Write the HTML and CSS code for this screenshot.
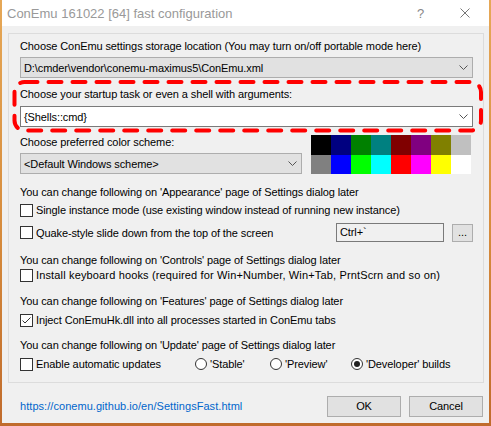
FILE: index.html
```html
<!DOCTYPE html>
<html>
<head>
<meta charset="utf-8">
<link rel="stylesheet" href="styles.css">
</head>
<body>
<div class="window">
  <div class="titlebar">
    <span class="title">ConEmu 161022 [64] fast configuration</span>
    <span class="help">?</span>
    <span class="close"><svg width="10" height="10" viewBox="0 0 10 10"><path d="M0.5 0.5 L9.5 9.5 M9.5 0.5 L0.5 9.5" stroke="#777" stroke-width="1" fill="none"/></svg></span>
  </div>
  <div class="group">
    <div class="label">Choose ConEmu settings storage location (You may turn on/off portable mode here)</div>
    <div class="combo disabled mt4"><span class="combo-text">D:\cmder\vendor\conemu-maximus5\ConEmu.xml</span><svg class="chev" width="9" height="5" viewBox="0 0 9 5"><path d="M0.5 0.5 L4.5 4.5 L8.5 0.5" stroke="#555" fill="none"/></svg></div>
    <div class="label mt9">Choose your startup task or even a shell with arguments:</div>
    <div class="combo white mt5"><span class="combo-text">{Shells::cmd}</span><svg class="chev" width="9" height="5" viewBox="0 0 9 5"><path d="M0.5 0.5 L4.5 4.5 L8.5 0.5" stroke="#555" fill="none"/></svg></div>
    <div class="scheme-row mt8">
      <div class="scheme-left">
        <div class="label">Choose preferred color scheme:</div>
        <div class="combo disabled mt4"><span class="combo-text">&lt;Default Windows scheme&gt;</span><svg class="chev" width="9" height="5" viewBox="0 0 9 5"><path d="M0.5 0.5 L4.5 4.5 L8.5 0.5" stroke="#555" fill="none"/></svg></div>
      </div>
      <div class="palette">
        <i class="c0"></i><i class="c1"></i><i class="c2"></i><i class="c3"></i><i class="c4"></i><i class="c5"></i><i class="c6"></i><i class="c7"></i>
        <i class="c8"></i><i class="c9"></i><i class="c10"></i><i class="c11"></i><i class="c12"></i><i class="c13"></i><i class="c14"></i><i class="c15"></i>
      </div>
    </div>
    <div class="label mt11">You can change following on 'Appearance' page of Settings dialog later</div>
    <div class="check mt4"><span class="box"></span><span>Single instance mode (use existing window instead of running new instance)</span></div>
    <div class="quake-row mt6">
      <div class="check grow"><span class="box"></span><span>Quake-style slide down from the top of the screen</span></div>
      <div class="hotkey">Ctrl+`</div>
      <div class="dots">...</div>
    </div>
    <div class="label mt11">You can change following on 'Controls' page of Settings dialog later</div>
    <div class="check mt1"><span class="box"></span><span class="wide">Install keyboard hooks (required for Win+Number, Win+Tab, PrntScrn and so on)</span></div>
    <div class="label mt12">You can change following on 'Features' page of Settings dialog later</div>
    <div class="check mt5"><span class="box checked"><svg width="11" height="11" viewBox="0 0 11 11"><path d="M1.5 5.5 L4 8 L9.5 2.5" stroke="#333" stroke-width="1" fill="none"/></svg></span><span>Inject ConEmuHk.dll into all processes started in ConEmu tabs</span></div>
    <div class="label mt11">You can change following on 'Update' page of Settings dialog later</div>
    <div class="update-row mt5">
      <div class="check"><span class="box"></span><span>Enable automatic updates</span></div>
      <div class="check"><span class="radio"></span><span>'Stable'</span></div>
      <div class="check"><span class="radio"></span><span>'Preview'</span></div>
      <div class="check"><span class="radio on"><span class="dot"></span></span><span>'Developer' builds</span></div>
    </div>
  </div>
  <div class="footer">
    <span class="link">https://conemu.github.io/en/SettingsFast.html</span>
    <div class="buttons">
      <div class="button">OK</div>
      <div class="button">Cancel</div>
    </div>
  </div>
</div>
<svg class="highlight" width="491" height="426" viewBox="0 0 491 426">
  <rect x="14.5" y="82" width="466.5" height="48.5" rx="10" ry="10" fill="none" stroke="#ff0000" stroke-width="4" stroke-dasharray="13 11" stroke-linecap="round"/>
</svg>
</body>
</html>
```
FILE: styles.css
```css
* { box-sizing: border-box; }
html, body { margin: 0; padding: 0; }
body {
  width: 491px;
  height: 426px;
  position: relative;
  overflow: hidden;
  background: linear-gradient(180deg, #e6a857 0%, #d68b3c 55%, #c06b2c 100%);
  font-family: "Liberation Sans", Arial, sans-serif;
  font-size: 11px;
  letter-spacing: -0.1px;
  color: #000;
}
.window {
  margin-left: 2px;
  width: 487px;
  height: 423px;
  background: #f0f0f0;
  display: flex;
  flex-direction: column;
}
.titlebar {
  height: 26px;
  flex-shrink: 0;
  background: #fff;
  display: flex;
  align-items: center;
}
.title {
  flex: 1;
  padding-left: 5px;
  font-size: 13px;
  letter-spacing: 0;
  color: #999;
}
.help {
  width: 45px;
  text-align: center;
  font-size: 13px;
  color: #888;
}
.close {
  width: 44px;
  margin-right: 2px;
  display: flex;
  justify-content: center;
}
.group {
  margin: 7px 5px 0 6px;
  border: 1px solid #dcdcdc;
  padding: 5px 10px 11px 11px;
  display: flex;
  flex-direction: column;
}
.label {
  height: 14px;
  line-height: 14px;
  white-space: nowrap;
}
.mt1 { margin-top: 1px; }
.mt4 { margin-top: 4px; }
.mt5 { margin-top: 5px; }
.mt6 { margin-top: 6px; }
.mt8 { margin-top: 8px; }
.mt9 { margin-top: 9px; }
.mt11 { margin-top: 11px; }
.mt12 { margin-top: 12px; }
.combo {
  height: 21px;
  border: 1px solid #adadad;
  background: #e1e1e1;
  display: flex;
  align-items: center;
  padding: 0 4px 0 3px;
}
.combo.white {
  background: #fff;
  border-color: #7a7a7a;
}
.combo-text { flex: 1; white-space: nowrap; }
.chev { display: block; }
.scheme-row {
  display: flex;
  height: 39px;
}
.scheme-left {
  width: 282px;
  display: flex;
  flex-direction: column;
}
.palette {
  margin-left: 9px;
  width: 160px;
  height: 39px;
  display: grid;
  grid-template-columns: repeat(8, 20px);
  grid-template-rows: 19.5px 19.5px;
}
.palette i { display: block; }
.c0 { background: #000000; }
.c1 { background: #000080; }
.c2 { background: #008000; }
.c3 { background: #008080; }
.c4 { background: #800000; }
.c5 { background: #800080; }
.c6 { background: #808000; }
.c7 { background: #c0c0c0; }
.c8 { background: #808080; }
.c9 { background: #0000ff; }
.c10 { background: #00ff00; }
.c11 { background: #00ffff; }
.c12 { background: #ff0000; }
.c13 { background: #ff00ff; }
.c14 { background: #ffff00; }
.c15 { background: #ffffff; }
.check {
  height: 14px;
  display: flex;
  align-items: center;
  white-space: nowrap;
}
.wide { letter-spacing: 0.15px; }
.box {
  width: 13px;
  height: 13px;
  border: 1px solid #333;
  background: #fff;
  margin-right: 3px;
  flex-shrink: 0;
  display: flex;
  align-items: center;
  justify-content: center;
}
.radio {
  width: 12px;
  height: 12px;
  border: 1px solid #333;
  border-radius: 50%;
  background: #fff;
  margin-right: 3px;
  flex-shrink: 0;
  display: flex;
  align-items: center;
  justify-content: center;
}
.dot {
  width: 6px;
  height: 6px;
  border-radius: 50%;
  background: #222;
}
.quake-row {
  height: 19px;
  display: flex;
  align-items: center;
}
.grow { flex: 1; }
.hotkey {
  width: 108px;
  height: 19px;
  border: 1px solid #7a7a7a;
  background: #f0f0f0;
  padding-left: 3px;
  line-height: 17px;
}
.dots {
  margin-left: 8px;
  width: 21px;
  height: 18px;
  border: 1px solid #adadad;
  background: #e1e1e1;
  text-align: center;
  line-height: 14px;
}
.update-row {
  display: grid;
  grid-template-columns: 175px 75px 81px 1fr;
  height: 14px;
}
.footer {
  flex: 1;
  display: flex;
  align-items: flex-start;
  padding: 13px 6px 0 18px;
}
.link {
  line-height: 21px;
  color: #0066cc;
  white-space: nowrap;
  letter-spacing: 0.05px;
}
.buttons {
  margin-left: auto;
  display: flex;
  gap: 8px;
}
.button {
  width: 74px;
  height: 21px;
  border: 1px solid #adadad;
  background: #e1e1e1;
  text-align: center;
  line-height: 19px;
}
.highlight {
  position: absolute;
  left: 0;
  top: 0;
  pointer-events: none;
}
```
